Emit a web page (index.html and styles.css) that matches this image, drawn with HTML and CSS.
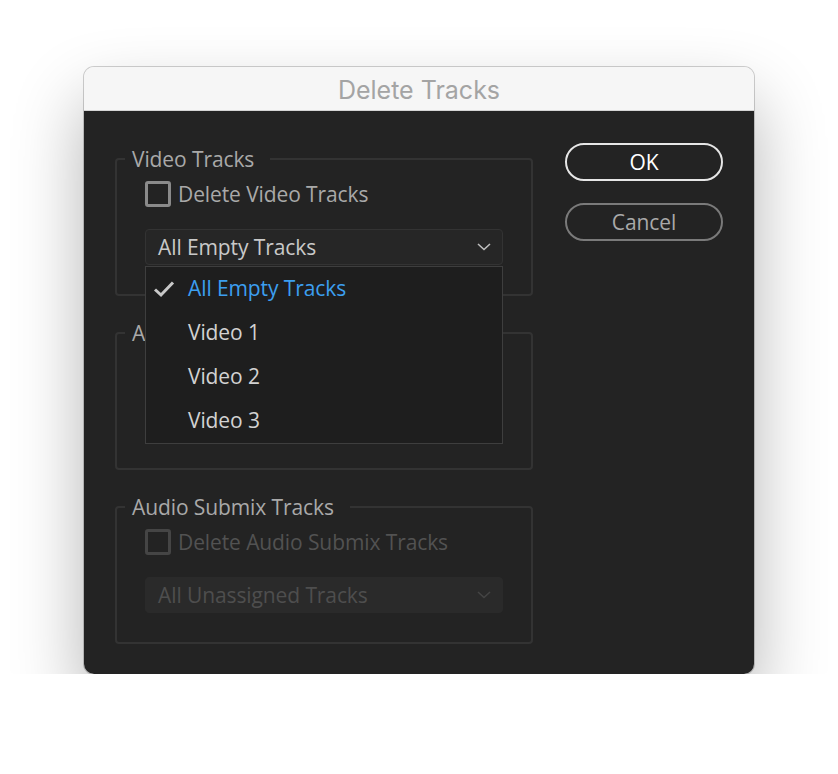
FILE: index.html
```html
<!DOCTYPE html>
<html lang="en">

<head>
    <meta charset="UTF-8">
    <meta name="viewport" content="width=device-width, initial-scale=1.0">
    <title>Delete Tracks</title>

    <link rel="stylesheet" href="styles.css">
</head>

<body>

    <div class="vindu">
        <div class="tittel">Delete Tracks</div>

        <div class="innhold">
            <div class="venstre">

                <!-- video -->
                <fieldset class="gruppe">
                    <legend>Video Tracks</legend>
                    <label class="avkryss">
                        <span class="boks"></span> Delete Video Tracks
                    </label>
                    <div class="nedtrekk aapen">
                        <span>All Empty Tracks</span>
                        <svg class="pil" width="14" height="8" viewBox="0 0 14 8"><path d="M1 1 L7 6.5 L13 1" fill="none" stroke="#bdbdbd" stroke-width="1.6"/></svg>

                        <ul class="meny">
                            <li class="valgt">
                                <svg class="hake" width="22" height="18" viewBox="0 0 22 18"><path d="M2 9.5 L8 15 L20 2.5" fill="none" stroke="#c8c8c8" stroke-width="3"/></svg>
                                All Empty Tracks
                            </li>
                            <li>Video 1</li>
                            <li>Video 2</li>
                            <li>Video 3</li>
                        </ul>
                    </div>
                </fieldset>

                <!-- audio, dekket av menyen -->
                <fieldset class="gruppe">
                    <legend>Audio Tracks</legend>
                    <label class="avkryss skjult">
                        <span class="boks"></span> Delete Audio Tracks
                    </label>
                    <div class="nedtrekk skjult">
                        <span>All Empty Tracks</span>
                    </div>
                </fieldset>

                <!-- submix, disabled -->
                <fieldset class="gruppe">
                    <legend>Audio Submix Tracks</legend>
                    <label class="avkryss av">
                        <span class="boks"></span> Delete Audio Submix Tracks
                    </label>
                    <div class="nedtrekk av">
                        <span>All Unassigned Tracks</span>
                        <svg class="pil" width="14" height="8" viewBox="0 0 14 8"><path d="M1 1 L7 6.5 L13 1" fill="none" stroke="#444" stroke-width="1.6"/></svg>
                    </div>
                </fieldset>
            </div>

            <div class="hoyre">
                <button class="knapp ok">OK</button>
                <button class="knapp">Cancel</button>
            </div>
        </div>
    </div>

</body>
</html>
```

FILE: styles.css
```css
body {
    margin: 0;
    padding-top: 67px;
    background-color: #ffffff;
    font-family: "Open Sans", "Noto Sans", sans-serif;
}

/* selve dialogvinduet */
.vindu {
    width: 670px;
    margin: 0 auto;
    border-radius: 10px;
    overflow: hidden;
    box-shadow: 0 34px 70px rgba(0, 0, 0, 0.3), 0 0 0 1px rgba(0, 0, 0, 0.18);
}

.tittel {
    height: 43px;
    line-height: 47px;
    background-color: #f6f6f6;
    border-bottom: 1px solid #d4d4d4;
    text-align: center;
    font-family: Inter, "Liberation Sans", sans-serif;
    font-size: 25px;
    color: #a4a4a4;
}

.innhold {
    display: flex;
    gap: 32px;
    padding: 32px 31px 30px 31px;
    background-color: #232323;
}

.venstre {
    width: 418px;
    padding-top: 4px;
    display: flex;
    flex-direction: column;
    gap: 25px;
}

/* grupper med ramme */
.gruppe {
    margin: 0;
    padding: 9px 28px 29px 28px;
    border: 2px solid #333333;
    border-radius: 4px;
    font-size: 21px;
    font-weight: 500;
    letter-spacing: -0.1px;
}

.gruppe legend {
    margin-left: -20px;
    padding: 0 16px 0 7px;
    line-height: 24px;
    color: #a9a9a9;
}

.avkryss {
    display: flex;
    align-items: center;
    gap: 7px;
    height: 28px;
    color: #a9a9a9;
}

.boks {
    width: 20px;
    height: 20px;
    border: 3px solid #8a8a8a;
    border-radius: 3px;
}

.avkryss.av {
    color: #525252;
}

.avkryss.av .boks {
    border-color: #454545;
}

.skjult {
    visibility: hidden;
}

/* nedtrekksliste */
.nedtrekk {
    position: relative;
    display: flex;
    align-items: center;
    justify-content: space-between;
    height: 34px;
    margin-top: 21px;
    padding: 0 11px 0 12px;
    background-color: #262626;
    border: 1px solid #333333;
    border-radius: 4px;
    color: #c9c9c9;
}

.nedtrekk.av {
    background-color: #2a2a2a;
    border-color: #2a2a2a;
    color: #4e4e4e;
}

.meny {
    position: absolute;
    top: 36px;
    left: -1px;
    width: 356px;
    margin: 0;
    padding: 0;
    list-style: none;
    background-color: #1e1e1e;
    border: 1px solid #3e3e3e;
    z-index: 2;
}

.meny li {
    position: relative;
    height: 44px;
    line-height: 43px;
    padding-left: 42px;
    color: #d2d2d2;
}

.meny li.valgt {
    color: #3c9ff0;
}

.hake {
    position: absolute;
    left: 7px;
    top: 13px;
}

/* knapper til hoyre */
.hoyre {
    display: flex;
    flex-direction: column;
    gap: 22px;
}

.knapp {
    width: 158px;
    height: 38px;
    border: 2px solid #7a7a7a;
    border-radius: 19px;
    background: transparent;
    font-family: inherit;
    font-size: 21px;
    font-weight: 500;
    letter-spacing: -0.1px;
    color: #a9a9a9;
}

.knapp.ok {
    border-color: #e6e6e6;
    color: #ffffff;
}
```
